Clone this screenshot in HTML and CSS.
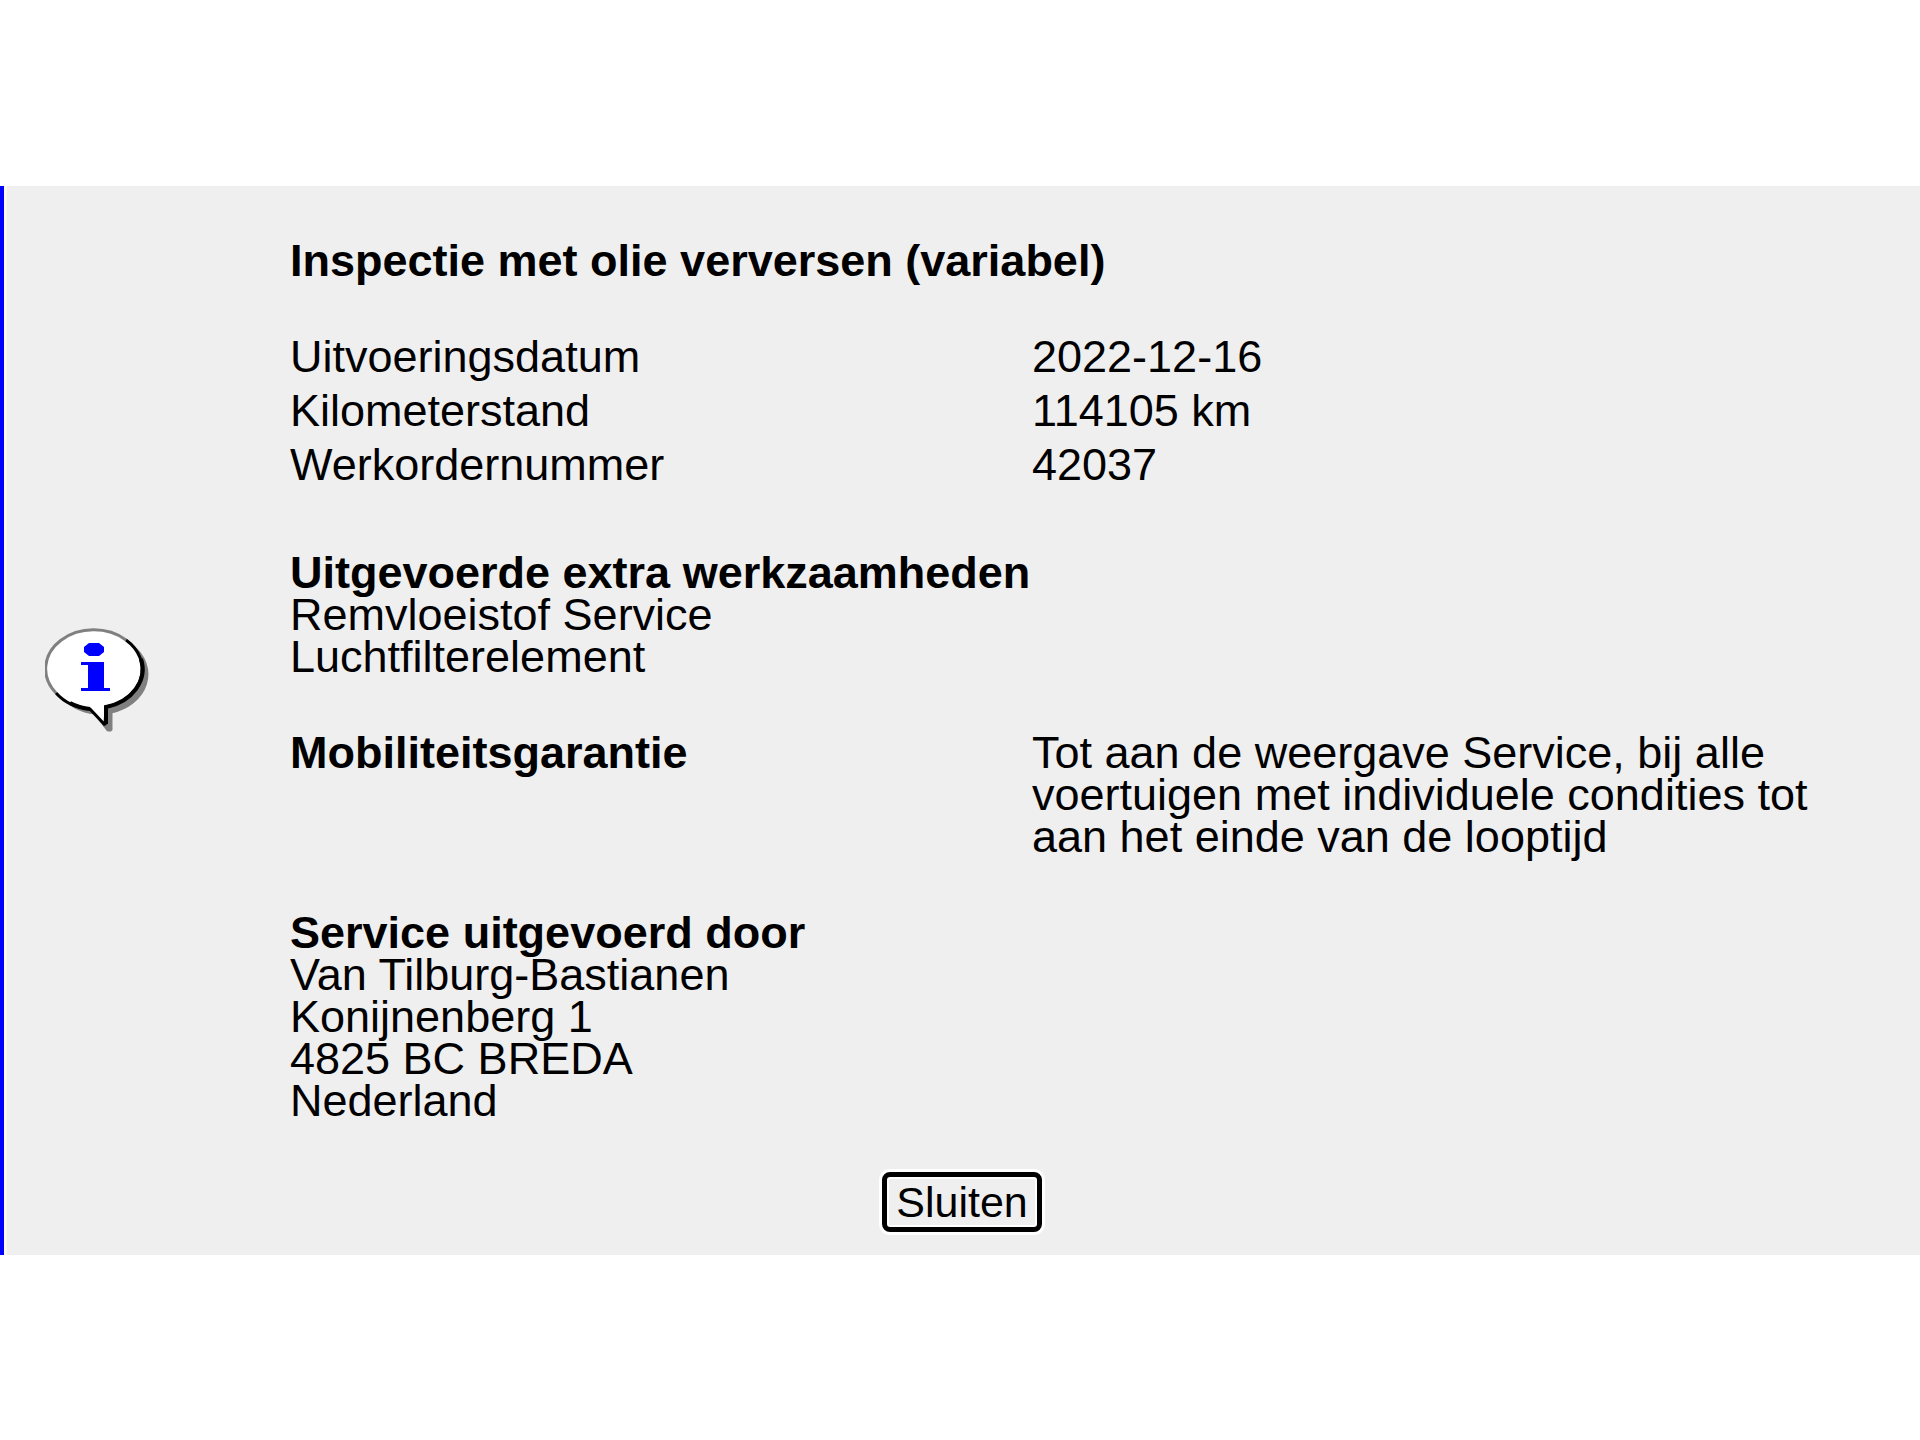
FILE: index.html
```html
<!DOCTYPE html>
<html lang="nl">
<head>
  <meta charset="utf-8">
  <meta name="viewport" content="width=device-width, initial-scale=1">
  <title>Inspectie met olie verversen (variabel)</title>
  <link rel="stylesheet" href="styles.css">
</head>
<body>
  <main class="panel">
    <div class="panel-body">
      <div class="icon-column">
        <svg class="info-icon" viewBox="0 0 104 105" role="img" aria-label="Informatie">
          <path fill="#808080" stroke="#808080" stroke-width="3" stroke-linejoin="bevel" d="M87 18A48 39 0 0 1 66 84L66 102H63L50 85A48 39 0 0 1 17 68Z"/>
          <path fill="#fff" d="M81 12A48 39 0 0 1 61 79L59 97L45 81A48 39 0 0 1 11 65A48 39 0 0 1 81 12Z"/>
          <path fill="none" stroke="#808080" stroke-width="3" d="M11 65A48 39 0 0 1 81 12"/>
          <path fill="none" stroke="#000" stroke-width="3" stroke-linejoin="bevel" d="M81 12A48 39 0 0 1 61 79L60 97L45 81A48 39 0 0 1 11 65"/>
          <path fill="none" stroke="#000" stroke-width="4" d="M96 31A48 39 0 0 1 61 79V96M45 81A48 39 0 0 1 25 75"/>
          <path fill="#00f" d="M44 15H54L59 19V24L54 28H44L39 24V19ZM36 34H59V60H65V63H36V60H43V37H36Z"/>
        </svg>
      </div>
      <div class="details">
        <h1 class="heading title">Inspectie met olie verversen (variabel)</h1>
        <table class="facts">
          <tbody>
            <tr><th scope="row">Uitvoeringsdatum</th><td>2022-12-16</td></tr>
            <tr><th scope="row">Kilometerstand</th><td>114105 km</td></tr>
            <tr><th scope="row">Werkordernummer</th><td>42037</td></tr>
          </tbody>
        </table>
        <section class="section">
          <h2 class="heading">Uitgevoerde extra werkzaamheden</h2>
          <ul class="work-list">
            <li>Remvloeistof Service</li>
            <li>Luchtfilterelement</li>
          </ul>
        </section>
        <section class="section columns">
          <h2 class="heading">Mobiliteitsgarantie</h2>
          <p class="warranty">Tot aan de weergave Service, bij alle voertuigen met individuele condities tot aan het einde van de looptijd</p>
        </section>
        <section class="section">
          <h2 class="heading">Service uitgevoerd door</h2>
          <address class="address">Van Tilburg-Bastianen<br>Konijnenberg 1<br>4825 BC BREDA<br>Nederland</address>
        </section>
      </div>
    </div>
    <div class="actions">
      <button class="close-button" type="button">Sluiten</button>
    </div>
  </main>
</body>
</html>
```
FILE: styles.css
```css
* {
  box-sizing: border-box;
}

body {
  display: flex;
  flex-direction: column;
  justify-content: center;
  min-height: 100vh;
  margin: 0;
  background: #fff;
  color: #000;
  font: 45px/42px "Liberation Sans", Arial, sans-serif;
}

.panel {
  padding: 54px 0 23px;
  border-left: 4px solid #00f;
  background: #efefef;
  box-shadow: inset 3px 0 #fbf8ec;
}

.panel-body {
  display: grid;
  grid-template-columns: 286px 1fr;
  align-items: center;
}

.icon-column {
  padding-left: 41px;
}

.info-icon {
  display: block;
  width: 104px;
  height: 105px;
}

.heading {
  margin: 0;
  font-size: 45px;
  font-weight: 700;
}

.title {
  margin-bottom: 48px;
}

.facts {
  width: 100%;
  margin-bottom: 60px;
  border-collapse: collapse;
  table-layout: fixed;
}

.facts th,
.facts td {
  padding: 6px 0;
  font-weight: 400;
  text-align: left;
}

.facts th {
  width: 742px;
}

.section + .section {
  margin-top: 54px;
}

.columns {
  display: grid;
  grid-template-columns: 742px 1fr;
}

.work-list {
  margin: 0;
  padding: 0;
  list-style: none;
}

.warranty {
  margin: 0;
  padding-right: 60px;
}

.address {
  font-style: normal;
}

.actions {
  display: flex;
  justify-content: center;
  margin-top: 50px;
}

.close-button {
  padding: 4px 9px;
  border: 5px solid #000;
  border-radius: 8px;
  background: #efefef;
  box-shadow: 0 0 0 3px #fff, inset 0 0 0 2px #fff;
  color: inherit;
  font: inherit;
  font-size: 43px;
}
```
